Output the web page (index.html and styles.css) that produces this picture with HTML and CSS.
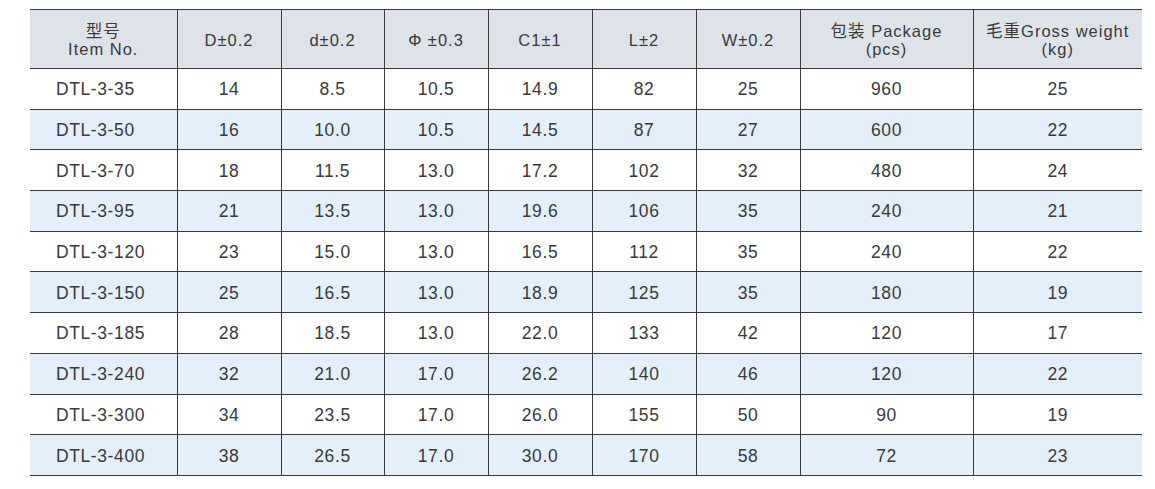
FILE: index.html
```html
<!DOCTYPE html>
<html lang="zh">
<head>
<meta charset="utf-8">
<title>DTL-3</title>
<link rel="stylesheet" href="styles.css">
</head>
<body>
<table class="spec">
  <colgroup>
    <col class="c-item"><col class="c-n"><col class="c-n2"><col class="c-n"><col class="c-n"><col class="c-n"><col class="c-n"><col class="c-pkg"><col class="c-wt">
  </colgroup>
  <thead>
    <tr>
      <th>型号<br>Item No.</th>
      <th>D±0.2</th>
      <th>d±0.2</th>
      <th>Φ ±0.3</th>
      <th>C1±1</th>
      <th>L±2</th>
      <th>W±0.2</th>
      <th>包装 Package<br>(pcs)</th>
      <th>毛重Gross weight<br>(kg)</th>
    </tr>
  </thead>
  <tbody>
    <tr><td class="item">DTL-3-35</td><td>14</td><td>8.5</td><td>10.5</td><td>14.9</td><td>82</td><td>25</td><td>960</td><td>25</td></tr>
    <tr class="alt"><td class="item">DTL-3-50</td><td>16</td><td>10.0</td><td>10.5</td><td>14.5</td><td>87</td><td>27</td><td>600</td><td>22</td></tr>
    <tr><td class="item">DTL-3-70</td><td>18</td><td>11.5</td><td>13.0</td><td>17.2</td><td>102</td><td>32</td><td>480</td><td>24</td></tr>
    <tr class="alt"><td class="item">DTL-3-95</td><td>21</td><td>13.5</td><td>13.0</td><td>19.6</td><td>106</td><td>35</td><td>240</td><td>21</td></tr>
    <tr><td class="item">DTL-3-120</td><td>23</td><td>15.0</td><td>13.0</td><td>16.5</td><td>112</td><td>35</td><td>240</td><td>22</td></tr>
    <tr class="alt"><td class="item">DTL-3-150</td><td>25</td><td>16.5</td><td>13.0</td><td>18.9</td><td>125</td><td>35</td><td>180</td><td>19</td></tr>
    <tr><td class="item">DTL-3-185</td><td>28</td><td>18.5</td><td>13.0</td><td>22.0</td><td>133</td><td>42</td><td>120</td><td>17</td></tr>
    <tr class="alt"><td class="item">DTL-3-240</td><td>32</td><td>21.0</td><td>17.0</td><td>26.2</td><td>140</td><td>46</td><td>120</td><td>22</td></tr>
    <tr><td class="item">DTL-3-300</td><td>34</td><td>23.5</td><td>17.0</td><td>26.0</td><td>155</td><td>50</td><td>90</td><td>19</td></tr>
    <tr class="alt"><td class="item">DTL-3-400</td><td>38</td><td>26.5</td><td>17.0</td><td>30.0</td><td>170</td><td>58</td><td>72</td><td>23</td></tr>
  </tbody>
</table>
</body>
</html>
```

FILE: styles.css
```css
html, body {
  margin: 0;
  padding: 0;
  background: #ffffff;
}

body {
  padding: 9px 0 0 30px;
  font-family: "Liberation Sans", Arial, "Noto Sans CJK SC", sans-serif;
  color: #3a3a3a;
}

.spec {
  border-collapse: collapse;
  table-layout: fixed;
  width: 1112px;
  border-top: 1px solid #3a3a3a;
  border-bottom: 1px solid #3a3a3a;
}

.c-item { width: 147px; }
.c-n { width: 104px; }
.c-n2 { width: 103px; }
.c-pkg { width: 173px; }
.c-wt { width: 169px; }

.spec th,
.spec td {
  border-left: 1px solid #3a3a3a;
  border-top: 1px solid #3a3a3a;
  text-align: center;
  vertical-align: middle;
  padding: 0;
}

.spec th:first-child,
.spec td:first-child {
  border-left: none;
}

.spec th {
  background: #dee3ea;
  height: 57px;
  padding-top: 1px;
  font-weight: normal;
  font-size: 16.5px;
  line-height: 18px;
  letter-spacing: 1px;
  font-family: "Liberation Sans", Arial, "Noto Sans CJK SC", sans-serif;
}

.spec td {
  height: 40.7px;
  padding-top: 2px;
  box-sizing: border-box;
  font-size: 17.5px;
  letter-spacing: 0.6px;
}

.spec td.item {
  text-align: left;
  padding-left: 26px;
}

.spec tr.alt td {
  background: #e3effa;
}
```
